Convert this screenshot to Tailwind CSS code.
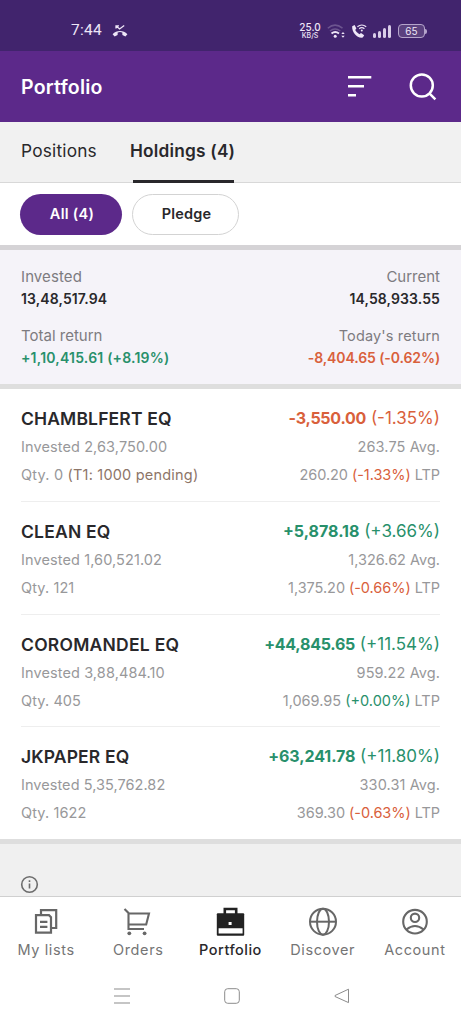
<!DOCTYPE html>
<html lang="en">
<head>
    <meta charset="UTF-8">
    <meta name="viewport" content="width=device-width, initial-scale=1.0">
    <title>Portfolio - Holdings</title>
    <script src="https://cdn.jsdelivr.net/npm/@tailwindcss/browser@4"></script>
</head>
<body class="bg-white h-[1024px] w-[461px] flex flex-col overflow-hidden font-['Inter','Liberation_Sans',sans-serif] text-[#29282b] whitespace-nowrap">

    <!-- Status bar -->
    <div class="h-[51px] shrink-0 bg-[#41246d] text-[#eee6f7] pt-[21px] pl-[71px] pr-[34px] flex justify-between items-start">
        <div class="flex items-center h-5">
            <span class="text-[15.5px] tracking-[0.3px] font-['Roboto',sans-serif] w-[41px]">7:44</span>
            <svg class="w-4 h-4" viewBox="0 0 16 16" fill="none" stroke="currentColor" stroke-width="1.3">
                <path d="M4 5.6V2.8h3M4.2 3l3.4 3 4.6-3.6"/>
                <path d="M.6 11.3C4.5 6.9 11.5 6.9 15.4 11.3L13.4 13.5 10.4 12 10.3 9.4Q8 8.8 5.7 9.4L5.6 12 2.6 13.5Z" fill="currentColor" stroke="none"/>
            </svg>
        </div>
        <div class="flex items-center h-5">
            <div class="w-[26px] text-center font-medium mr-1 ml-[-5px]">
                <div class="text-[10px] leading-[10px]">25.0</div>
                <div class="text-[7px] leading-[8px]">KB/S</div>
            </div>
            <svg class="w-[19px] h-[16px] mr-[5px]" viewBox="0 0 19 16" fill="none" stroke="currentColor" stroke-width="1.5">
                <path d="M.8 5.2Q8 -1 15.5 5.2M3 8Q8 3.8 13.3 8" opacity=".25"/>
                <path d="M4.5 10.5Q8.2 7.6 12 10.5" stroke-width="1.9"/>
                <circle cx="8.2" cy="13.2" r="1.5" fill="currentColor" stroke="none"/>
                <path d="M14.3 11 16 9l1.7 2zM14.3 12.8h3.4L16 14.8z" fill="currentColor" stroke="none"/>
            </svg>
            <svg class="w-[16px] h-[16px] mr-[6px]" viewBox="0 0 16 16" fill="none" stroke="currentColor" stroke-width="1.2">
                <path d="M1.2 3.2 3.6 2 5.4 5.4 4.2 7Q5.6 9.8 8.4 11.2L10 10 13.2 12.2 11.8 14.6C6 15.5.6 9 1.2 3.2Z" fill="currentColor" stroke="none"/>
                <path d="M6.4 3.8Q10.8.2 15.2 3.8M8.2 5.8Q10.8 3.6 13.4 5.8"/>
                <circle cx="10.8" cy="7.4" r="1" fill="currentColor" stroke="none"/>
            </svg>
            <div class="flex items-end gap-[2px] h-[13px] mr-[6px] w-[19px]">
                <div class="w-[3px] h-[5px] rounded-sm bg-[#d9cde8]"></div>
                <div class="w-[3px] h-[7px] rounded-sm bg-[#d9cde8]"></div>
                <div class="w-[3px] h-[10px] rounded-sm bg-[#d9cde8]"></div>
                <div class="w-[3px] h-[13px] rounded-sm bg-[#d9cde8]"></div>
            </div>
            <div class="w-[27px] h-[14px] border border-[#b5a5cb] bg-[#5b417f] rounded-[4px] text-[10px] leading-[12px] text-center">65</div>
            <div class="w-[2px] h-[5px] bg-[#b5a5cb] rounded-r"></div>
        </div>
    </div>

    <!-- App bar -->
    <header class="h-[71px] shrink-0 bg-[#5c298a] text-white pl-[21px] pr-[24px] flex items-center">
        <h1 class="flex-1 text-[19.5px] font-semibold tracking-[0.2px] pt-[2px]">Portfolio</h1>
        <svg class="w-6 h-6 mr-[37px]" viewBox="0 0 24 24" stroke="currentColor" stroke-width="2.6">
            <path d="M0 2.3h23.3M0 11.3h16M0 20.3h8"/>
        </svg>
        <svg class="w-7 h-7" viewBox="0 0 28 28" fill="none" stroke="currentColor" stroke-width="2.5">
            <circle cx="12.8" cy="12.5" r="11"/>
            <path d="m20.4 20.3 6 6"/>
        </svg>
    </header>

    <!-- Tabs -->
    <nav class="h-[61px] shrink-0 bg-[#f1f1f1] border-b border-[#d8d8d8] pl-[21px] flex text-[17.3px] leading-[58px]">
        <div class="w-[109px] tracking-[0.2px]">Positions</div>
        <div class="relative font-semibold tracking-[0.2px]">
            Holdings (4)
            <div class="absolute left-[3px] bottom-[-1px] w-[101px] h-[3px] bg-[#29282b]"></div>
        </div>
    </nav>

    <!-- Filters -->
    <div class="h-[62px] shrink-0 pt-[11px] pl-5 flex gap-[10px] text-[14.5px] font-semibold leading-[40px] text-center">
        <div class="w-[102px] h-[41px] rounded-full bg-[#5c298a] text-white tracking-[0.3px] pl-[2px]">All (4)</div>
        <div class="w-[107px] h-[41px] rounded-full border border-[#d3d3d3] leading-[38px] tracking-[0.2px] pl-[2px]">Pledge</div>
    </div>

    <!-- Summary -->
    <section class="h-[144px] shrink-0 bg-[#f5f3f9] border-y-[5px] border-[#dedede] border-t-[#d5d3d6] px-[21px] pt-4 grid grid-cols-2 auto-rows-[59px] text-[14px]">
        <div>
            <div class="text-[15px] leading-[22px] tracking-[0.1px] text-[#7d7b80]">Invested</div>
            <div class="leading-[22px] tracking-[0.1px] font-semibold">13,48,517.94</div>
        </div>
        <div class="text-right">
            <div class="text-[15px] leading-[22px] text-[#7d7b80]">Current</div>
            <div class="leading-[22px] tracking-[0.1px] font-semibold">14,58,933.55</div>
        </div>
        <div>
            <div class="text-[15px] leading-[22px] text-[#7d7b80]">Total return</div>
            <div class="leading-[22px] tracking-[0.2px] font-semibold text-[#28906b]">+1,10,415.61 (+8.19%)</div>
        </div>
        <div class="text-right">
            <div class="text-[14.5px] leading-[22px] tracking-[0.15px] text-[#7d7b80]">Today's return</div>
            <div class="leading-[22px] tracking-[-0.1px] font-semibold text-[#d9603b]">-8,404.65 (-0.62%)</div>
        </div>
    </section>

    <!-- Holdings -->
    <main class="h-[450px] shrink-0 px-[21px] text-[14.5px] tracking-[0.1px] text-[#98989a]">
        <div class="h-[113px] border-b border-[#eee] pt-[15px] flex justify-between leading-7">
            <div>
                <h2 class="text-[17.5px] leading-[29px] tracking-[0.15px] font-semibold text-[#29282b]">CHAMBLFERT EQ</h2>
                <p>Invested 2,63,750.00</p>
                <p class="tracking-[0.2px]">Qty. 0 <span class="text-[#8d7568]">(T1: 1000 pending)</span></p>
            </div>
            <div class="text-right">
                <p class="text-[17px] leading-[29px] tracking-normal text-[#d9603b]"><b class="text-[16px] tracking-[-0.25px]">-3,550.00</b> (-1.35%)</p>
                <p>263.75 Avg.</p>
                <p class="leading-[27px] tracking-[-0.05px]">260.20 <span class="text-[#d9603b]">(-1.33%)</span> LTP</p>
            </div>
        </div>
        <div class="h-[113px] border-b border-[#eee] pt-[15px] flex justify-between leading-7">
            <div>
                <h2 class="text-[17.5px] leading-[29px] tracking-[0.2px] font-semibold text-[#29282b]">CLEAN EQ</h2>
                <p>Invested 1,60,521.02</p>
                <p>Qty. 121</p>
            </div>
            <div class="text-right">
                <p class="text-[17px] leading-[29px] tracking-normal text-[#28906b]"><b class="text-[16px]">+5,878.18</b> (+3.66%)</p>
                <p class="tracking-normal">1,326.62 Avg.</p>
                <p class="leading-[27px] tracking-[-0.05px]">1,375.20 <span class="text-[#d9603b]">(-0.66%)</span> LTP</p>
            </div>
        </div>
        <div class="h-[112px] border-b border-[#eee] pt-[15px] flex justify-between leading-7">
            <div>
                <h2 class="text-[17.5px] leading-[29px] tracking-[0.25px] font-semibold text-[#29282b]">COROMANDEL EQ</h2>
                <p>Invested 3,88,484.10</p>
                <p>Qty. 405</p>
            </div>
            <div class="text-right">
                <p class="text-[17px] leading-[29px] tracking-normal text-[#28906b]"><b class="text-[16px] tracking-[-0.25px]">+44,845.65</b> (+11.54%)</p>
                <p>959.22 Avg.</p>
                <p class="leading-[27px] tracking-normal">1,069.95 <span class="text-[#28906b]">(+0.00%)</span> LTP</p>
            </div>
        </div>
        <div class="h-[112px] pt-[15px] flex justify-between leading-7">
            <div>
                <h2 class="text-[17.5px] leading-[29px] tracking-[0.15px] font-semibold text-[#29282b]">JKPAPER EQ</h2>
                <p class="tracking-[0.05px]">Invested 5,35,762.82</p>
                <p>Qty. 1622</p>
            </div>
            <div class="text-right">
                <p class="text-[17px] leading-[29px] tracking-normal text-[#28906b]"><b class="text-[16px] tracking-[-0.1px]">+63,241.78</b> (+11.80%)</p>
                <p>330.31 Avg.</p>
                <p class="leading-[27px] tracking-[-0.05px]">369.30 <span class="text-[#d9603b]">(-0.63%)</span> LTP</p>
            </div>
        </div>
    </main>

    <!-- Info strip -->
    <div class="h-[58px] shrink-0 bg-[#f0f0f0] border-t-[5px] border-t-[#dedede] border-b border-b-[#d0d0d0] pl-5 pt-[31px]">
        <svg class="w-[19px] h-[19px] text-[#6c6c6c]" viewBox="0 0 19 19" fill="none" stroke="currentColor" stroke-width="1.6">
            <circle cx="9.5" cy="9.5" r="7.8"/>
            <path d="M9.5 8.4v5M9.5 5.2v1.7"/>
        </svg>
    </div>

    <!-- Bottom navigation -->
    <nav class="h-[74px] shrink-0 grid grid-cols-5 pt-[9px] text-[14.5px] tracking-[0.6px] leading-5 text-center text-[#757575]">
        <div class="flex flex-col items-center gap-[2px]">
            <svg class="w-8 h-8" viewBox="0 0 32 32" fill="none" stroke="#676767" stroke-width="2.2">
                <path d="M11 8.4V4.2h15.2V22h-4.4"/>
                <path d="M6 9.2h13l2 2v15.4H6zM10 15.8h7.4M10 20.8h7.4"/>
            </svg>
            <span>My lists</span>
        </div>
        <div class="flex flex-col items-center gap-[2px]">
            <svg class="w-8 h-8" viewBox="0 0 32 32" fill="none" stroke="#676767" stroke-width="2.1">
                <path d="m2.5 3 4 4v16H22M6.5 7.5H27L24.2 18.5H6.5"/>
                <circle cx="7.3" cy="27.3" r="1.9" fill="#676767" stroke="none"/>
                <circle cx="22.6" cy="27.3" r="1.9" fill="#676767" stroke="none"/>
            </svg>
            <span>Orders</span>
        </div>
        <div class="flex flex-col items-center gap-[2px] text-[#29282b] font-medium tracking-[0.5px]">
            <svg class="w-8 h-8" viewBox="0 0 32 32" fill="#222">
                <path d="M10.8 8V3h11.4v5" fill="none" stroke="#222" stroke-width="2.6"/>
                <rect x="2.8" y="7.3" width="27.4" height="22.4" rx="1"/>
                <path d="M4.6 22.3h24v5.3h-24zM14.6 16h3v3h-3z" fill="#fff"/>
            </svg>
            <span>Portfolio</span>
        </div>
        <div class="flex flex-col items-center gap-[2px]">
            <svg class="w-8 h-8" viewBox="0 0 32 32" fill="none" stroke="#676767" stroke-width="2">
                <circle cx="16" cy="15.7" r="13"/>
                <path d="M3 15.7h26"/>
                <ellipse cx="16" cy="15.7" rx="6" ry="13"/>
            </svg>
            <span>Discover</span>
        </div>
        <div class="flex flex-col items-center gap-[2px]">
            <svg class="w-8 h-8" viewBox="0 0 32 32" fill="none" stroke="#676767" stroke-width="2.1">
                <circle cx="16" cy="15.7" r="11.8"/>
                <circle cx="16" cy="11.8" r="4.2"/>
                <path d="M7.5 23.5Q16 16.5 24.5 23.5"/>
            </svg>
            <span>Account</span>
        </div>
    </nav>

    <!-- System navigation -->
    <div class="flex-1 flex text-[#8c8c8c]">
        <svg class="w-4 h-4 ml-[114px] mt-[17px]" viewBox="0 0 16 16" stroke="currentColor" stroke-width="1.2"><path d="M0 1h16M0 8h16M0 15h16"/></svg>
        <svg class="w-4 h-4 ml-[94px] mt-[17px]" viewBox="0 0 16 16" fill="none" stroke="currentColor"><rect x=".7" y=".7" width="14.6" height="14.6" rx="3"/></svg>
        <svg class="w-4 h-4 ml-[94px] mt-[17px]" viewBox="0 0 16 16" fill="none" stroke="currentColor" stroke-linejoin="round"><path d="M14.5 1.2v13.4L1 8.5V7.5z"/></svg>
    </div>

</body>
</html>
